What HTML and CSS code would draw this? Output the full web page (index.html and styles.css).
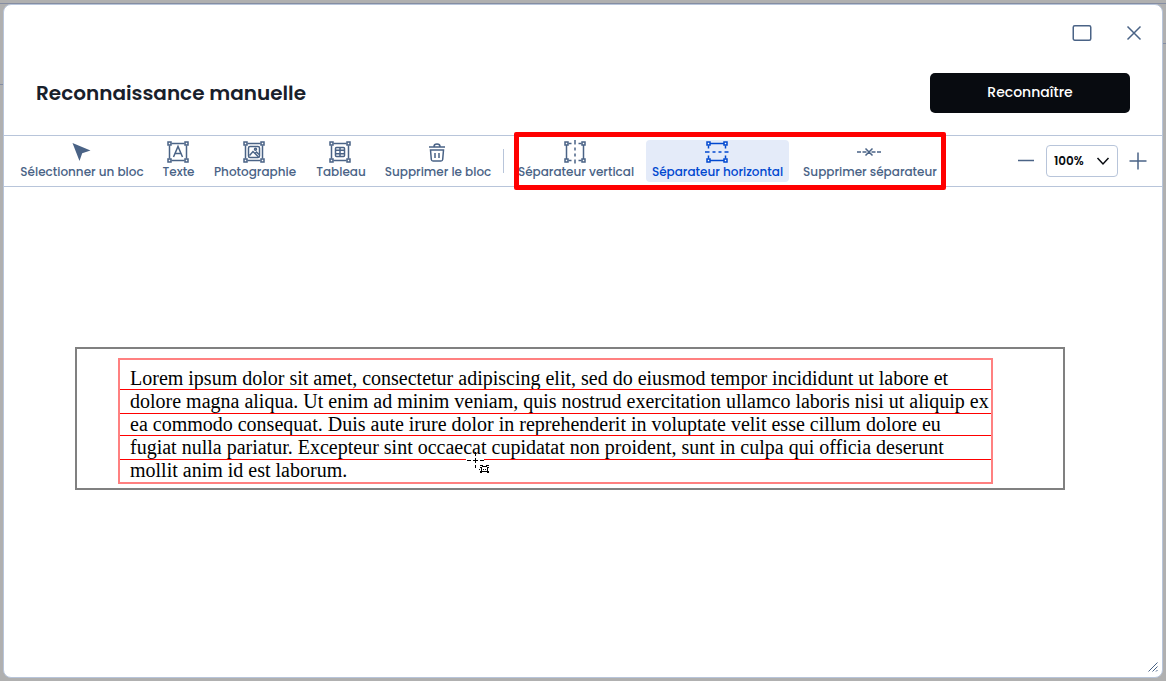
FILE: index.html
```html
<!DOCTYPE html>
<html lang="fr">
<head>
<meta charset="utf-8">
<title>Reconnaissance manuelle</title>
<link rel="stylesheet" href="styles.css">
</head>
<body>
<div class="backdrop">
<section class="dialog" role="dialog" aria-labelledby="title">
  <div class="window-controls">
    <button class="icon-button" type="button" aria-label="Agrandir">
      <svg width="22" height="20" viewBox="0 0 22 20"><rect x="2.25" y="2.75" width="17.5" height="14.5" rx="1.5"/></svg>
    </button>
    <button class="icon-button" type="button" aria-label="Fermer">
      <svg width="22" height="20" viewBox="0 0 22 20"><path d="M4.500 3.500l13 13M17.500 3.500l-13 13"/></svg>
    </button>
  </div>
  <header class="header">
    <h1 class="title" id="title">Reconnaissance manuelle</h1>
    <button class="primary" type="button">Reconnaître</button>
  </header>
  <div class="toolbar" role="toolbar">
    <div class="tools">
      <button class="tool tool-select" type="button">
        <svg width="24" height="24" viewBox="0 0 24 24"><path class="solid" d="M3.500 3L21.500 10.500L13.200 13.300L10.500 21Z"/></svg>
        <span>Sélectionner un bloc</span>
      </button>
      <button class="tool tool-text" type="button">
        <svg width="24" height="24" viewBox="0 0 24 24"><path d="M5.500 3.500h13M5.500 20.500h13M3.500 5.500v13M20.500 5.500v13M7.500 17L12 6.500L16.500 17M9.200 13.500h5.600"/><g class="corners"><rect x="2" y="2" width="3" height="3"/><rect x="19" y="2" width="3" height="3"/><rect x="2" y="19" width="3" height="3"/><rect x="19" y="19" width="3" height="3"/></g></svg>
        <span>Texte</span>
      </button>
      <button class="tool tool-photo" type="button">
        <svg width="24" height="24" viewBox="0 0 24 24"><path d="M5.500 3.500h13M5.500 20.500h13M3.500 5.500v13M20.500 5.500v13M7.500 15.500l3.500-4l5.500 5.500M13 13.500l1.500-1.500l2.500 2.500"/><rect x="6.500" y="6.500" width="11" height="11" rx="1.500"/><circle cx="13.500" cy="9.300" r="1"/><g class="corners"><rect x="2" y="2" width="3" height="3"/><rect x="19" y="2" width="3" height="3"/><rect x="2" y="19" width="3" height="3"/><rect x="19" y="19" width="3" height="3"/></g></svg>
        <span>Photographie</span>
      </button>
      <button class="tool tool-table" type="button">
        <svg width="24" height="24" viewBox="0 0 24 24"><path d="M5.500 3.500h13M5.500 20.500h13M3.500 5.500v13M20.500 5.500v13M7.500 10.300h9M7.500 13.700h9M12 7.500v9"/><rect x="7.500" y="7.500" width="9" height="9" rx="1"/><g class="corners"><rect x="2" y="2" width="3" height="3"/><rect x="19" y="2" width="3" height="3"/><rect x="2" y="19" width="3" height="3"/><rect x="19" y="19" width="3" height="3"/></g></svg>
        <span>Tableau</span>
      </button>
      <button class="tool tool-delete" type="button">
        <svg width="24" height="24" viewBox="0 0 24 24"><path d="M4 7h16M9 6.500q0-2.500 3-2.500q3 0 3 2.500M5.500 10l.8 9.500q.2 1.500 1.700 1.500h8q1.500 0 1.700-1.500l.8-9.500zM10 13v5M14 13v5"/></svg>
        <span>Supprimer le bloc</span>
      </button>
    </div>
    <span class="divider"></span>
    <div class="tools separators">
      <button class="tool tool-vertical" type="button">
        <svg width="24" height="24" viewBox="0 0 24 24"><path d="M3.500 5v14M20.500 5v14M5.500 3.500h3M15.500 3.500h3M5.500 20.500h3M15.500 20.500h3M12 0v4.500M12 7.500v3M12 13.500v3M12 19.500v4"/><g class="corners"><rect x="2" y="2" width="3" height="3"/><rect x="19" y="2" width="3" height="3"/><rect x="2" y="19" width="3" height="3"/><rect x="19" y="19" width="3" height="3"/></g></svg>
        <span>Séparateur vertical</span>
      </button>
      <button class="tool tool-horizontal active" type="button" aria-pressed="true">
        <svg width="24" height="24" viewBox="0 0 24 24"><path d="M5 3.500h14M5 20.500h14M3.500 5.500v3M3.500 15.500v3M20.500 5.500v3M20.500 15.500v3M0 12h4.500M7.500 12h3M13.500 12h3M19.500 12h4"/><g class="corners"><rect x="2" y="2" width="3" height="3"/><rect x="19" y="2" width="3" height="3"/><rect x="2" y="19" width="3" height="3"/><rect x="19" y="19" width="3" height="3"/></g></svg>
        <span>Séparateur horizontal</span>
      </button>
      <button class="tool tool-clear" type="button">
        <svg width="24" height="24" viewBox="0 0 24 24"><path d="M0 12h4M5.500 12h4M14.500 12h4M20 12h4M8.500 8.500l7 7M15.500 8.500l-7 7"/></svg>
        <span>Supprimer séparateur</span>
      </button>
      <span class="highlight"></span>
    </div>
    <div class="zoom">
      <button class="icon-button" type="button" aria-label="Zoom arrière">
        <svg width="20" height="20" viewBox="0 0 20 20"><path d="M2 9.500h16"/></svg>
      </button>
      <div class="zoom-field">
        <select class="zoom-select" aria-label="Zoom"><option>100%</option></select>
        <svg class="chevron" width="14" height="10" viewBox="0 0 14 10"><path d="M1.500 2l5.500 6l5.500-6"/></svg>
      </div>
      <button class="icon-button" type="button" aria-label="Zoom avant">
        <svg width="20" height="20" viewBox="0 0 20 20"><path d="M1.500 10h17M10 1.500v17"/></svg>
      </button>
    </div>
  </div>
  <main class="canvas">
    <div class="page">
      <div class="block">
        <p class="line">Lorem ipsum dolor sit amet, consectetur adipiscing elit, sed do eiusmod tempor incididunt ut labore et</p>
        <p class="line">dolore magna aliqua. Ut enim ad minim veniam, quis nostrud exercitation ullamco laboris nisi ut aliquip ex</p>
        <p class="line">ea commodo consequat. Duis aute irure dolor in reprehenderit in voluptate velit esse cillum dolore eu</p>
        <p class="line">fugiat nulla pariatur. Excepteur sint occaecat cupidatat non proident, sunt in culpa qui officia deserunt</p>
        <p class="line">mollit anim id est laborum.</p>
        <span class="rule rule-1"></span><span class="rule rule-2"></span><span class="rule rule-3"></span><span class="rule rule-4"></span>
        <svg class="cursor" width="25" height="24" viewBox="0 0 25 24"><path class="halo" d="M0 10h18v3H0z"/><path class="ink" d="M1 11h4v1H1zM7 11h5v1H7zM14 11h4v1h-4zM9 3h1v4H9zM9 9h1v5H9zM9 16h1v3H9zM14 16h3v1h-3zM20 16h3v1h-3zM14 18h2v1h-2zM21 18h2v1h-2zM16 17h5v1h-5zM15 19h1v3h-1zM21 19h1v3h-1zM13 20h1v1h-1zM17 20h1v1h-1zM19 20h1v1h-1zM14 22h2v2h-2zM21 22h2v2h-2zM16 22h5v1h-5z"/></svg>
      </div>
    </div>
  </main>
  <svg class="grip" width="10" height="10" viewBox="0 0 10 10"><path d="M.5 9.500l9-9M4.500 9.500l5-5M8 9.500l1.500-1.500"/></svg>
</section>
</div>
</body>
</html>
```
FILE: styles.css
```css
* { box-sizing: border-box; }
body { margin: 0; font-family: Poppins, Inter, sans-serif; color: #18202b; }
button, select { font: inherit; color: inherit; margin: 0; }
button { border: 0; padding: 0; background: none; cursor: pointer; }
svg { display: block; flex: none; fill: none; stroke: currentColor; stroke-width: 1.5; overflow: visible; }

.backdrop {
  min-height: 100vh;
  display: flex;
  padding: 4px 3px 3px;
  background:
    linear-gradient(#858da2, #858da2) 0 3px / 100% 1px no-repeat,
    linear-gradient(#858da2, #858da2) 0 84px / 4px 1px no-repeat,
    linear-gradient(#858da2, #858da2) 100% 43px / 4px 1px no-repeat,
    #b0b0b0;
}
.dialog {
  position: relative;
  flex: 1;
  min-width: 0;
  display: flex;
  flex-direction: column;
  background: #fff;
  border: 1px solid #b8c5da;
  border-radius: 8px;
}
.window-controls { display: flex; justify-content: flex-end; gap: 30px; padding: 18px 17px 0; color: #4a6386; }
.header { display: flex; align-items: center; justify-content: space-between; padding: 30px 32px 22px; }
.title { margin: 0; font-size: 20px; line-height: 30px; font-weight: 600; }
.primary { width: 200px; height: 40px; padding-bottom: 2px; border-radius: 5px; background: #080b10; color: #fff; font-size: 14px; font-weight: 500; }

.toolbar {
  display: flex;
  align-items: center;
  height: 52px;
  padding: 0 14px 0 10px;
  border-top: 1px solid #b8c5da;
  border-bottom: 1px solid #b8c5da;
  color: #4a6386;
}
.tools { display: flex; gap: 6px; }
.tool {
  display: flex;
  flex-direction: column;
  align-items: center;
  justify-content: flex-start;
  height: 42px;
  border-radius: 4px;
  font-size: 12px;
  line-height: 16px;
  font-weight: 500;
  white-space: nowrap;
}
.tool svg { margin-right: 2px; }
.tool-select { width: 136px; }
.tool-text { width: 45px; }
.tool-photo { width: 96px; }
.tool-table { width: 64px; }
.tool-delete { width: 118px; }
.tool-vertical { width: 128px; }
.tool-horizontal { width: 143px; }
.tool-clear { width: 150px; }
.active { background: #e4ebf9; color: #0048d0; }
.corners { fill: #fff; }
.divider { width: 1px; height: 24px; margin: 0 8px 0 6px; background: #b8c5da; }
.separators { position: relative; }
.highlight { position: absolute; inset: -8px -1px -8px 2px; border: 5px solid #f00; border-radius: 2px; pointer-events: none; }

.zoom { display: flex; align-items: center; gap: 10px; margin-left: auto; }
.zoom-field { position: relative; }
.zoom-select { display: block; appearance: none; width: 72px; height: 32px; padding: 0 7px 2px; border: 1px solid #b8c5da; border-radius: 4px; background: #fff; color: #080b10; font-size: 12px; font-weight: 600; }
.chevron { position: absolute; right: 8px; top: 11px; color: #080b10; pointer-events: none; }

.canvas { flex: 1; padding: 160px 97px 0 71px; }
.page { border: 2px solid #808080; padding: 9px 70px 4px 41px; }
.block {
  position: relative;
  padding: 7px 9px 0 10px;
  border: 2px solid #ff8080;
  color: #000;
  font: 20px/23px "Liberation Serif", serif;
}
.line { margin: 0; white-space: nowrap; }
.rule { position: absolute; left: 0; right: 0; height: 1px; background: #f00; }
.rule-1 { top: 29px; }
.rule-2 { top: 53px; }
.rule-3 { top: 75px; }
.rule-4 { top: 99px; }
.cursor { position: absolute; left: 346px; top: 89px; stroke: none; }
.halo { fill: #fff; }
.ink { fill: #000; }
.solid { fill: currentColor; stroke: none; }
.grip { position: absolute; right: 4px; bottom: 5px; color: #4a6386; stroke-width: 1; }
```
